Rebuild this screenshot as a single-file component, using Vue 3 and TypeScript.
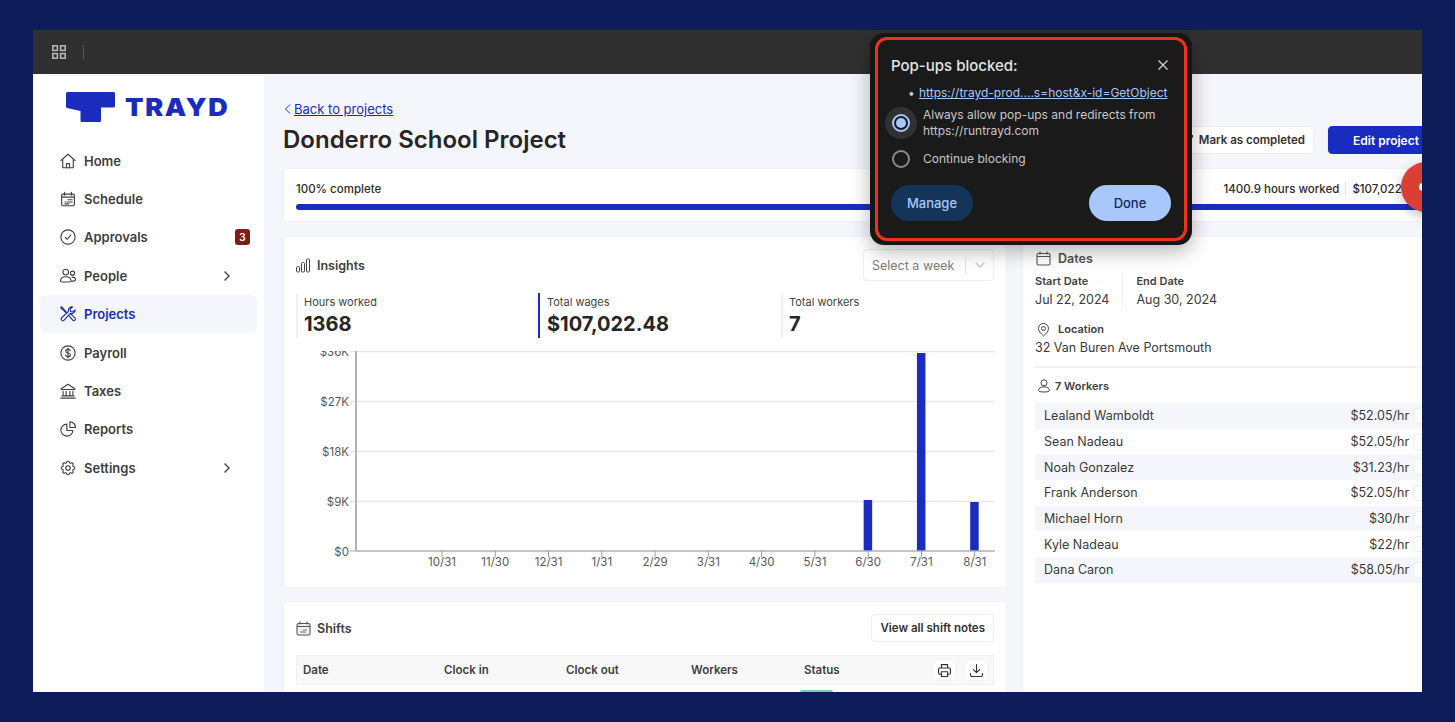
<script setup lang="ts">
interface NavItem {
  label: string;
  icon: string[];
  active?: boolean;
  badge?: number;
  more?: boolean;
}

const gear =
  'M10.3 4.3c.4-1.8 3-1.8 3.4 0a1.7 1.7 0 0 0 2.6 1.1c1.5-.9 3.3.8 2.3 2.4a1.7 1.7 0 0 0 1.1 2.5c1.8.4 1.8 3 0 3.4a1.7 1.7 0 0 0-1.1 2.6c.9 1.5-.8 3.3-2.3 2.3a1.7 1.7 0 0 0-2.6 1.1c-.4 1.8-3 1.8-3.4 0a1.7 1.7 0 0 0-2.6-1.1c-1.5.9-3.3-.8-2.3-2.3a1.7 1.7 0 0 0-1.1-2.6c-1.8-.4-1.8-3 0-3.4a1.7 1.7 0 0 0 1.1-2.5c-.9-1.6.8-3.3 2.3-2.4 1 .6 2.3.1 2.6-1.1z';

const navItems: NavItem[] = [
  { label: 'Home', icon: ['M2.5 11.5 12 3l9.5 8.5', 'M5 9.5V21h14V9.5', 'M10 21v-5.5h4V21'] },
  {
    label: 'Schedule',
    icon: [
      'M5.5 5.5h13a2 2 0 0 1 2 2V19a2 2 0 0 1-2 2h-13a2 2 0 0 1-2-2V7.500a2 2 0 0 1 2-2z',
      'M7.500 3v4M16.500 3v4M3.500 9.500h17',
      'M12 13h5.500M8 16h1M11 16h6.500M8 18.500h5',
    ],
  },
  { label: 'Approvals', icon: ['M12 2.500a9.500 9.500 0 1 0 0 19 9.500 9.500 0 0 0 0-19z', 'M8.500 12.500l2.500 2.500 4.500-5.500'] },
  {
    label: 'People',
    icon: [
      'M9 3a3.800 3.800 0 1 0 0 7.600A3.800 3.800 0 0 0 9 3z',
      'M18 5.500a2.700 2.700 0 1 0 0 5.400 2.700 2.700 0 0 0 0-5.400z',
      'M2 18.500c0-3.500 3-5.500 7-5.500s7 2 7 5.500c0 2-14 2-14 0z',
      'M17.500 13.500c2.500 0 4.500 1.500 4.500 3.500 0 1.500-2 2-5 1.800',
    ],
  },
  {
    label: 'Projects',
    active: true,
    icon: [
      'M21.500 6.500a5 5 0 0 1-6.500 4.700L6.800 20.300a2.300 2.300 0 0 1-3.300-3.300l9-8.200A5 5 0 0 1 18 2.500l-3.200 3.200.6 2.900 2.900.6 3.200-2.700z',
      'M10 9.500 5.500 5 5 3.500 3.300 2.300 2.200 3.400 3.400 5.200l1.500.5L9 10',
      'M13.500 14.500l5 6a2.200 2.200 0 0 0 3-3l-5.500-5.300',
    ],
  },
  {
    label: 'Payroll',
    icon: [
      'M12 2.500a9.500 9.500 0 1 0 0 19 9.500 9.500 0 0 0 0-19z',
      'M15 9c-.4-1.200-1.500-1.800-3-1.800-1.800 0-3 .9-3 2.300 0 3.200 6.200 1.700 6.200 5 0 1.400-1.300 2.300-3.200 2.300-1.600 0-2.800-.7-3.200-2',
      'M12 5.500v13',
    ],
  },
  { label: 'Taxes', icon: ['M3 9l9-6 9 6v1H3z', 'M5.500 12.500V18M9.500 12.500V18M14.500 12.500V18M18.500 12.500V18', 'M4 18.500h16M2.500 21.500h19'] },
  {
    label: 'Reports',
    icon: ['M10.500 5.500a8 8 0 1 0 8 8.500h-8z', 'M14.500 2.500V10h7.500a7.500 7.500 0 0 0-7.500-7.500z'],
  },
  { label: 'Settings', more: true, icon: [gear, 'M12 9a3 3 0 1 0 0 6 3 3 0 0 0 0-6z'] },
];

navItems[3].more = true;
navItems[2].badge = 3;

const stats = [
  { label: 'Hours worked', value: '1368', active: false },
  { label: 'Total wages', value: '$107,022.48', active: true },
  { label: 'Total workers', value: '7', active: false },
];

const yTicks = [
  { label: '$36K', y: 0.5 },
  { label: '$27K', y: 50.5 },
  { label: '$18K', y: 100.5 },
  { label: '$9K', y: 150.5 },
  { label: '$0', y: 200 },
];

const months = ['10/31', '11/30', '12/31', '1/31', '2/29', '3/31', '4/30', '5/31', '6/30', '7/31', '8/31', '9/30'];
const monthX = (i: number) => 86 + i * 53.27;
const bars = [
  { i: 8, top: 149 },
  { i: 9, top: 2 },
  { i: 10, top: 151 },
];

const workers = [
  { name: 'Lealand Wamboldt', rate: '$52.05/hr' },
  { name: 'Sean Nadeau', rate: '$52.05/hr' },
  { name: 'Noah Gonzalez', rate: '$31.23/hr' },
  { name: 'Frank Anderson', rate: '$52.05/hr' },
  { name: 'Michael Horn', rate: '$30/hr' },
  { name: 'Kyle Nadeau', rate: '$22/hr' },
  { name: 'Dana Caron', rate: '$58.05/hr' },
];

const shiftCols = ['Date', 'Clock in', 'Clock out', 'Workers', 'Status'];
</script>

<template>
  <div class="page">
    <div class="frame">
      <header class="topbar">
        <svg class="apps" width="16" height="16" viewBox="0 0 16 16" fill="none" stroke="#b5b5b5" stroke-width="1.600">
          <rect x="1.800" y="1.800" width="4.600" height="4.600" />
          <rect x="9.600" y="1.800" width="4.600" height="4.600" />
          <rect x="1.800" y="9.600" width="4.600" height="4.600" />
          <rect x="9.600" y="9.600" width="4.600" height="4.600" />
        </svg>
        <span class="topbar-sep"></span>
        <span class="topbar-green"></span>
      </header>

      <div class="body">
        <aside class="sidebar">
          <div class="logo">
            <svg width="50" height="31" viewBox="0 0 50 31" fill="#1a2cc0">
              <path d="M1.500 0H48a1.500 1.500 0 0 1 1 1.500V14a1.500 1.500 0 0 1-1.500 1.500H35V28.500a1.500 1.500 0 0 1-1.500 1.500H16a1.500 1.500 0 0 1-1.500-1.500V19L1 16a1.500 1.500 0 0 1-1-1.500V1.500A1.500 1.500 0 0 1 1.500 0z" />
            </svg>
            <span class="logo-text">TRAYD</span>
          </div>
          <nav class="nav">
            <a v-for="item in navItems" :key="item.label" class="nav-item" :class="{ active: item.active }">
              <svg class="nav-icon" width="18" height="18" viewBox="0 0 24 24" fill="none" stroke="currentColor" stroke-width="1.500" stroke-linecap="round" stroke-linejoin="round">
                <path v-for="d in item.icon" :key="d" :d="d" />
              </svg>
              <span class="nav-label">{{ item.label }}</span>
              <span v-if="item.badge" class="badge">{{ item.badge }}</span>
              <svg v-if="item.more" class="chevron" width="12" height="12" viewBox="0 0 12 12" fill="none" stroke="#444" stroke-width="1.400">
                <path d="M3.500 1.500 8 6l-4.500 4.500" />
              </svg>
            </a>
          </nav>
        </aside>

        <main class="main">
          <a class="back">
            <svg width="8" height="10" viewBox="0 0 8 10" fill="none" stroke="#1a2cc0" stroke-width="1">
              <path d="M6 .5 1.500 5 6 9.500" />
            </svg>
            <span>Back to projects</span>
          </a>

          <div class="title-row">
            <h1>Donderro School Project</h1>
            <div class="actions">
              <button class="btn">Run payroll</button>
              <button class="btn">
                <svg width="14" height="14" viewBox="0 0 14 14" fill="#2a2a2a">
                  <path d="M1 2h12v2.500H1zM2 5.500h10V12H2zM6.400 6.800v1.400H5l2 2 2-2H7.600V6.800z" fill-rule="evenodd" />
                </svg>
                Mark as completed
              </button>
              <button class="btn primary">Edit project</button>
            </div>
          </div>

          <section class="card progress-card">
            <div class="progress-head">
              <span>100% complete</span>
              <div class="progress-right">
                <span>1400.9 hours worked</span>
                <span class="progress-sep"></span>
                <span>$107,022.48</span>
              </div>
            </div>
            <div class="progress-bar"></div>
          </section>

          <div class="columns">
            <div class="left-col">
              <section class="card insights">
                <div class="card-head">
                  <div class="card-title">
                    <svg width="15" height="15" viewBox="0 0 15 15" fill="none" stroke="#444" stroke-width="1">
                      <rect x=".500" y="8.500" width="3" height="5.500" rx="1" />
                      <rect x="5.500" y="4.500" width="3" height="9.500" rx="1" />
                      <rect x="10.500" y="1" width="3" height="13" rx="1" />
                    </svg>
                    Insights
                  </div>
                  <div class="select">
                    <span class="select-text">Select a week</span>
                    <span class="select-sep"></span>
                    <svg width="10" height="6" viewBox="0 0 10 6" fill="none" stroke="#c4c4c4" stroke-width="1.300">
                      <path d="M1 1l4 4 4-4" />
                    </svg>
                  </div>
                </div>

                <div class="stats">
                  <div v-for="s in stats" :key="s.label" class="stat" :class="{ active: s.active }">
                    <div class="stat-label">{{ s.label }}</div>
                    <div class="stat-value">{{ s.value }}</div>
                  </div>
                </div>

                <svg class="chart" width="700" height="228" viewBox="-60 0 700 228">
                  <g v-for="t in yTicks" :key="t.label">
                    <line v-if="t.y !== 200" x1="-6" :y1="t.y" x2="639" :y2="t.y" stroke="#e6e6e6" stroke-width="1.500" />
                    <line v-else x1="-6" y1="200" x2="0" y2="200" stroke="#aaa" />
                    <text x="-7" :y="t.y + 4.500" text-anchor="end" class="tick">{{ t.label }}</text>
                  </g>
                  <rect v-for="b in bars" :key="b.i" :x="monthX(b.i) - 4.500" :y="b.top" width="8.500" :height="200 - b.top" fill="#1a2cc0" />
                  <line x1="0" y1="0" x2="0" y2="200" stroke="#b4b4b4" stroke-width="2" />
                  <line x1="0" y1="200" x2="639" y2="200" stroke="#b0b0b0" stroke-width="1.500" />
                  <g v-for="(m, i) in months" :key="m">
                    <line :x1="monthX(i)" y1="200" :x2="monthX(i)" y2="206" stroke="#999" />
                    <text :x="monthX(i)" y="215" text-anchor="middle" class="tick">{{ m }}</text>
                  </g>
                </svg>
              </section>

              <section class="card shifts">
                <div class="card-head">
                  <div class="card-title">
                    <svg width="15" height="15" viewBox="0 0 15 15" fill="#f0f0f0" stroke="#555" stroke-width="1.100">
                      <rect x="1" y="2.500" width="13" height="11.500" rx="1.500" />
                      <path d="M4 .5v3M11 .5v3M1 5.500h13" fill="none" />
                      <path d="M7 9h4M4 11h6" fill="none" stroke-width=".8" />
                    </svg>
                    Shifts
                  </div>
                  <button class="btn notes">View all shift notes</button>
                </div>
                <div class="table-head">
                  <span v-for="c in shiftCols" :key="c" class="col">{{ c }}</span>
                  <div class="table-actions">
                    <button class="icon-btn">
                      <svg width="15" height="15" viewBox="0 0 24 24" fill="none" stroke="#333" stroke-width="1.800" stroke-linejoin="round">
                        <path d="M7 8V2.500h10V8M7 18H4.500A2 2 0 0 1 2.500 16v-6a2 2 0 0 1 2-2h15a2 2 0 0 1 2 2v6a2 2 0 0 1-2 2H17" />
                        <path d="M7 14h10v7.500H7z" />
                      </svg>
                    </button>
                    <button class="icon-btn">
                      <svg width="15" height="15" viewBox="0 0 24 24" fill="none" stroke="#333" stroke-width="1.800" stroke-linecap="round" stroke-linejoin="round">
                        <path d="M12 2.500V15M7 10.500l5 5 5-5M2.500 17v2.500a2 2 0 0 0 2 2h15a2 2 0 0 0 2-2V17" />
                      </svg>
                    </button>
                  </div>
                </div>
                <div class="table-row">
                  <span class="status-tag">Paid</span>
                </div>
              </section>
            </div>

            <section class="card details">
              <div class="detail-title">
                <svg width="15" height="15" viewBox="0 0 15 15" fill="none" stroke="#555" stroke-width="1.100">
                  <rect x="1" y="2.500" width="13" height="11.500" rx="1.500" />
                  <path d="M4 .5v3M11 .5v3M1 5.500h13" />
                </svg>
                Dates
              </div>
              <div class="dates">
                <div class="date-col">
                  <div class="detail-label">Start Date</div>
                  <div class="detail-value">Jul 22, 2024</div>
                </div>
                <div class="date-col">
                  <div class="detail-label">End Date</div>
                  <div class="detail-value">Aug 30, 2024</div>
                </div>
              </div>
              <div class="location-label">
                <svg width="13" height="14" viewBox="0 0 13 14" fill="none" stroke="#444" stroke-width="1">
                  <path d="M6.500 13C4 10.500 1.500 8.500 1.500 5.500a5 5 0 0 1 10 0c0 3-2.500 5-5 7.500z" />
                  <circle cx="6.500" cy="5.500" r="2" />
                </svg>
                <span class="detail-label">Location</span>
              </div>
              <div class="detail-value">32 Van Buren Ave Portsmouth</div>
              <div class="detail-rule"></div>
              <div class="workers-title">
                <svg width="14" height="14" viewBox="0 0 14 14" fill="none" stroke="#444" stroke-width="1">
                  <circle cx="7" cy="3.800" r="3" />
                  <path d="M1.500 11.500c0-2.500 2.500-3.700 5.500-3.700s5.500 1.200 5.500 3.700c0 2-11 2-11 0z" />
                </svg>
                7 Workers
              </div>
              <div class="workers">
                <div v-for="w in workers" :key="w.name" class="worker">
                  <span class="worker-name">{{ w.name }}</span>
                  <span class="worker-rate">{{ w.rate }}</span>
                  <span class="worker-btn"></span>
                </div>
              </div>
            </section>
          </div>
        </main>
      </div>

      <div class="fab"><span class="fab-dot"></span></div>

      <div class="popup">
        <div class="popup-inner">
          <div class="popup-head">
            <span class="popup-title">Pop-ups blocked:</span>
            <svg width="10" height="10" viewBox="0 0 10 10" stroke="#d0d0d0" stroke-width="1.300">
              <path d="M.5.500l9 9M9.500.500l-9 9" />
            </svg>
          </div>
          <a class="popup-link"><span class="bullet">•</span>https://trayd-prod....s=host&amp;x-id=GetObject</a>
          <div class="radio-row first">
            <span class="radio checked"><span class="radio-dot"></span></span>
            <span>Always allow pop-ups and redirects from<br />https://runtrayd.com</span>
          </div>
          <div class="radio-row">
            <span class="radio"></span>
            <span>Continue blocking</span>
          </div>
          <div class="popup-actions">
            <button class="pill manage">Manage</button>
            <button class="pill done">Done</button>
          </div>
        </div>
      </div>
    </div>
  </div>
</template>

<style>
html,
body {
  margin: 0;
  background: #0f1c5a;
}
</style>

<style scoped>
* {
  box-sizing: border-box;
}

.page {
  width: 1455px;
  height: 722px;
  padding: 30px 33px;
  background: #0f1c5a;
  font-family: Inter, "Liberation Sans", sans-serif;
  color: #2b2b2b;
  overflow: hidden;
}

.frame {
  position: relative;
  width: 1389px;
  height: 662px;
  overflow: hidden;
  display: flex;
  flex-direction: column;
  background: #f5f6fb;
}

.topbar {
  flex: none;
  height: 44px;
  background: #303030;
  display: flex;
  align-items: center;
  padding-left: 18px;
}

.topbar-sep {
  width: 1px;
  height: 15px;
  margin-left: 16px;
  background: #555;
}

.topbar-green {
  width: 2px;
  height: 16px;
  margin-left: 1076px;
  background: #3fae6b;
}

.body {
  flex: 1;
  display: flex;
  min-height: 0;
}

.sidebar {
  flex: none;
  width: 231px;
  background: #fff;
  padding: 18px 7px 0;
}

.logo {
  display: flex;
  align-items: center;
  gap: 9px;
  padding-left: 26px;
  height: 31px;
}

.logo-text {
  font-size: 24.500px;
  font-weight: 900;
  letter-spacing: 1.500px;
  color: #1a2cc0;
  line-height: 1;
  transform: scaleX(1.100);
  transform-origin: left center;
}

.nav {
  margin-top: 18.500px;
  display: flex;
  flex-direction: column;
}

.nav-item {
  height: 38.400px;
  display: flex;
  align-items: center;
  padding: 0 7px 0 19px;
  border-radius: 6px;
  font-size: 13px;
  font-weight: 600;
  color: #404040;
}

.nav-item.active {
  background: #f5f6fb;
  color: #1a2cc0;
}

.nav-icon {
  flex: none;
}

.nav-label {
  margin-left: 7px;
  flex: 1;
}

.badge {
  width: 15px;
  height: 16px;
  border-radius: 3px;
  background: #7f1d14;
  color: #fff;
  font-size: 10px;
  display: flex;
  align-items: center;
  justify-content: center;
}

.chevron {
  margin-right: 17px;
}

.main {
  flex: none;
  width: 1190px;
  padding: 27px 0 0 19px;
}

.back {
  display: flex;
  align-items: center;
  gap: 2px;
  height: 16px;
  font-size: 13px;
  color: #1a2cc0;
  padding-left: 1px;
}

.back span {
  text-decoration: underline;
}

.title-row {
  display: flex;
  align-items: center;
  justify-content: space-between;
  width: 1150px;
  height: 30px;
  margin-top: 8px;
}

h1 {
  margin: 0;
  font-size: 24px;
  line-height: 30px;
  font-weight: 600;
  color: #262626;
}

.actions {
  display: flex;
  gap: 14px;
}

.btn {
  height: 28px;
  padding: 0 8px;
  display: inline-flex;
  align-items: center;
  gap: 5px;
  background: #fff;
  border: 1px solid #eceef3;
  border-radius: 4px;
  font-family: inherit;
  font-size: 11.500px;
  font-weight: 600;
  color: #333;
  white-space: nowrap;
}

.btn.primary {
  width: 105px;
  background: #1a2cc0;
  border-color: #1a2cc0;
  color: #fff;
  font-size: 12px;
  padding-left: 24px;
}

.card {
  background: #fff;
  border: 1px solid #f0f1f5;
  border-radius: 3px;
}

.progress-card {
  width: 1150px;
  height: 54px;
  margin-top: 13px;
  padding: 12px 12px 0;
}

.progress-head {
  display: flex;
  justify-content: space-between;
  align-items: center;
  font-size: 11.500px;
  font-weight: 500;
  height: 15px;
}

.progress-right {
  display: flex;
  align-items: center;
  gap: 6px;
}

.progress-sep {
  width: 1px;
  height: 15px;
  background: #e7e7ea;
}

.progress-bar {
  height: 6px;
  margin-top: 8px;
  border-radius: 3px;
  background: #1a2cc0;
}

.columns {
  display: flex;
  align-items: flex-start;
  gap: 15px;
  margin-top: 14px;
}

.left-col {
  flex: none;
  width: 724px;
  display: flex;
  flex-direction: column;
  gap: 13px;
}

.insights {
  height: 352px;
  padding: 12px 12px 0;
}

.card-head {
  display: flex;
  align-items: center;
  justify-content: space-between;
}

.insights .card-head {
  height: 32px;
}

.card-title {
  display: flex;
  align-items: center;
  gap: 6px;
  font-size: 12.500px;
  font-weight: 600;
  color: #404040;
}

.select {
  width: 131px;
  height: 32px;
  border: 1px solid #eeeeee;
  border-radius: 4px;
  display: flex;
  align-items: center;
  padding-left: 8px;
}

.select-text {
  font-size: 12.500px;
  color: #808080;
  width: 93px;
}

.select-sep {
  width: 1px;
  height: 17px;
  background: #e3e3e3;
  margin-right: 9px;
}

.stats {
  display: grid;
  grid-template-columns: 242px 243px 1fr;
  margin-top: 12px;
}

.stat {
  height: 45px;
  border-left: 2px solid #edf0f8;
  padding: 2px 0 0 6px;
}

.stat.active {
  border-left-color: #1a2cc0;
  padding-left: 7px;
}

.stat-label {
  font-size: 11px;
  line-height: 14px;
  color: #444;
}

.stat-value {
  margin-top: 3px;
  font-size: 20px;
  line-height: 24px;
  font-weight: 700;
  color: #262626;
}

.chart {
  display: block;
  margin-top: 12.500px;
}

.tick {
  font-family: Inter, "Liberation Sans", sans-serif;
  font-size: 11.500px;
  fill: #595959;
}

.shifts {
  height: 200px;
  padding: 12px 12px 0;
}

.shifts .card-head {
  height: 28px;
}

.btn.notes {
  border-radius: 4px;
}

.table-head {
  position: relative;
  display: flex;
  align-items: center;
  height: 30px;
  margin-top: 13px;
  background: #f8f8f9;
  border: 1px solid #f0f1f5;
  font-size: 11.500px;
  font-weight: 600;
  color: #404040;
}

.col {
  padding-left: 6px;
}

.col:nth-child(1) {
  width: 141px;
}

.col:nth-child(2) {
  width: 122px;
}

.col:nth-child(3) {
  width: 125px;
}

.col:nth-child(4) {
  width: 113px;
}

.table-actions {
  margin-left: auto;
  display: flex;
  gap: 7px;
  margin-right: 4px;
}

.icon-btn {
  width: 25px;
  height: 22px;
  padding: 0;
  background: #fff;
  border: 1px solid #f0f1f5;
  border-radius: 5px;
  display: flex;
  align-items: center;
  justify-content: center;
}

.table-row {
  height: 40px;
  padding: 5px 0 0 504px;
}

.status-tag {
  display: block;
  width: 33px;
  height: 20px;
  background: #7fcfa6;
  border-radius: 2px;
  font-size: 11px;
  text-align: center;
}

.details {
  flex: none;
  width: 420px;
  height: 460px;
  padding: 13px 12px 0;
}

.detail-title {
  display: flex;
  align-items: center;
  gap: 7px;
  height: 16px;
  padding-left: 1px;
  font-size: 12.500px;
  font-weight: 600;
  color: #505050;
}

.dates {
  display: flex;
  margin-top: 8px;
}

.date-col {
  height: 35px;
  padding-right: 13px;
}

.date-col + .date-col {
  border-left: 1px solid #eeeeee;
  padding-left: 13px;
}

.detail-label {
  font-size: 11px;
  line-height: 15px;
  font-weight: 600;
  color: #404040;
}

.detail-value {
  margin-top: 2px;
  font-size: 12.500px;
  line-height: 17px;
  color: #3a3a3a;
  white-space: nowrap;
}

.location-label {
  display: flex;
  align-items: center;
  gap: 8px;
  margin-top: 13px;
  padding-left: 2px;
  height: 15px;
}

.detail-rule {
  height: 2px;
  margin-top: 10px;
  background: #f2f2f4;
}

.workers-title {
  display: flex;
  align-items: center;
  gap: 4px;
  margin-top: 10px;
  padding-left: 2px;
  height: 15px;
  font-size: 11px;
  font-weight: 600;
  color: #404040;
}

.workers {
  margin-top: 10px;
}

.worker {
  display: flex;
  align-items: center;
  height: 25.700px;
  padding: 0 0 0 9px;
  font-size: 12.500px;
  color: #3a3a3a;
}

.worker:nth-child(odd) {
  background: #f5f6fb;
}

.worker-name {
  width: 300px;
}

.worker-rate {
  width: 68px;
  text-align: right;
}

.worker-btn {
  width: 16px;
  height: 16px;
  margin-left: 4px;
  border: 1px solid #eceef3;
  border-radius: 4px;
  background: #fff;
}

.fab {
  position: absolute;
  left: 1368px;
  top: 132px;
  width: 50px;
  height: 50px;
  border-radius: 50%;
  background: #d93f33;
  box-shadow: 0 4px 12px rgba(0, 0, 0, 0.25);
}

.fab-dot {
  display: block;
  position: absolute;
  left: 18px;
  top: 21px;
  width: 8px;
  height: 8px;
  border-radius: 50%;
  background: #fff;
}

.popup {
  position: absolute;
  left: 837px;
  top: 3px;
  width: 322px;
  height: 212px;
  padding: 4px 5px;
  background: #161616;
  border-radius: 14px;
  box-shadow: 0 6px 20px rgba(0, 0, 0, 0.3);
  font-family: Inter, "Liberation Sans", sans-serif;
}

.popup-inner {
  height: 100%;
  border: 3px solid #e8351f;
  border-radius: 12px;
  background: #1a1a1a;
  padding: 16px 13px 0;
  color: #c7c7c7;
  font-size: 12px;
}

.popup-head {
  display: flex;
  align-items: center;
  justify-content: space-between;
  padding-right: 3px;
  height: 18px;
}

.popup-title {
  font-size: 15px;
  font-weight: 500;
  color: #e3e3e3;
}

.popup-link {
  display: block;
  margin: 11px 0 0 16px;
  font-size: 12px;
  line-height: 16px;
  color: #a8c7fa;
  text-decoration: underline;
  white-space: nowrap;
}

.bullet {
  display: inline-block;
  width: 12px;
  padding-left: 1px;
}

.radio-row {
  display: flex;
  align-items: center;
  gap: 13px;
  margin-top: 11px;
  line-height: 16px;
}

.radio-row.first {
  margin-top: 6px;
}

.radio {
  flex: none;
  position: relative;
  width: 18px;
  height: 18px;
  margin-left: 1px;
  border: 2px solid #8a8a8a;
  border-radius: 50%;
}

.radio.checked {
  border-color: #a8c7fa;
  box-shadow: 0 0 0 7px #303133;
  background: #1a1a1a;
}

.radio-dot {
  position: absolute;
  left: 2px;
  top: 2px;
  width: 10px;
  height: 10px;
  border-radius: 50%;
  background: #a8c7fa;
}

.popup-actions {
  display: flex;
  justify-content: space-between;
  margin-top: 17px;
  padding-right: 0;
}

.pill {
  width: 82px;
  height: 36px;
  border: none;
  border-radius: 18px;
  font-family: inherit;
  font-size: 13px;
  font-weight: 500;
}

.manage {
  background: #143559;
  color: #a8c7fa;
}

.done {
  background: #a8c7fa;
  color: #0f2a66;
}
</style>
